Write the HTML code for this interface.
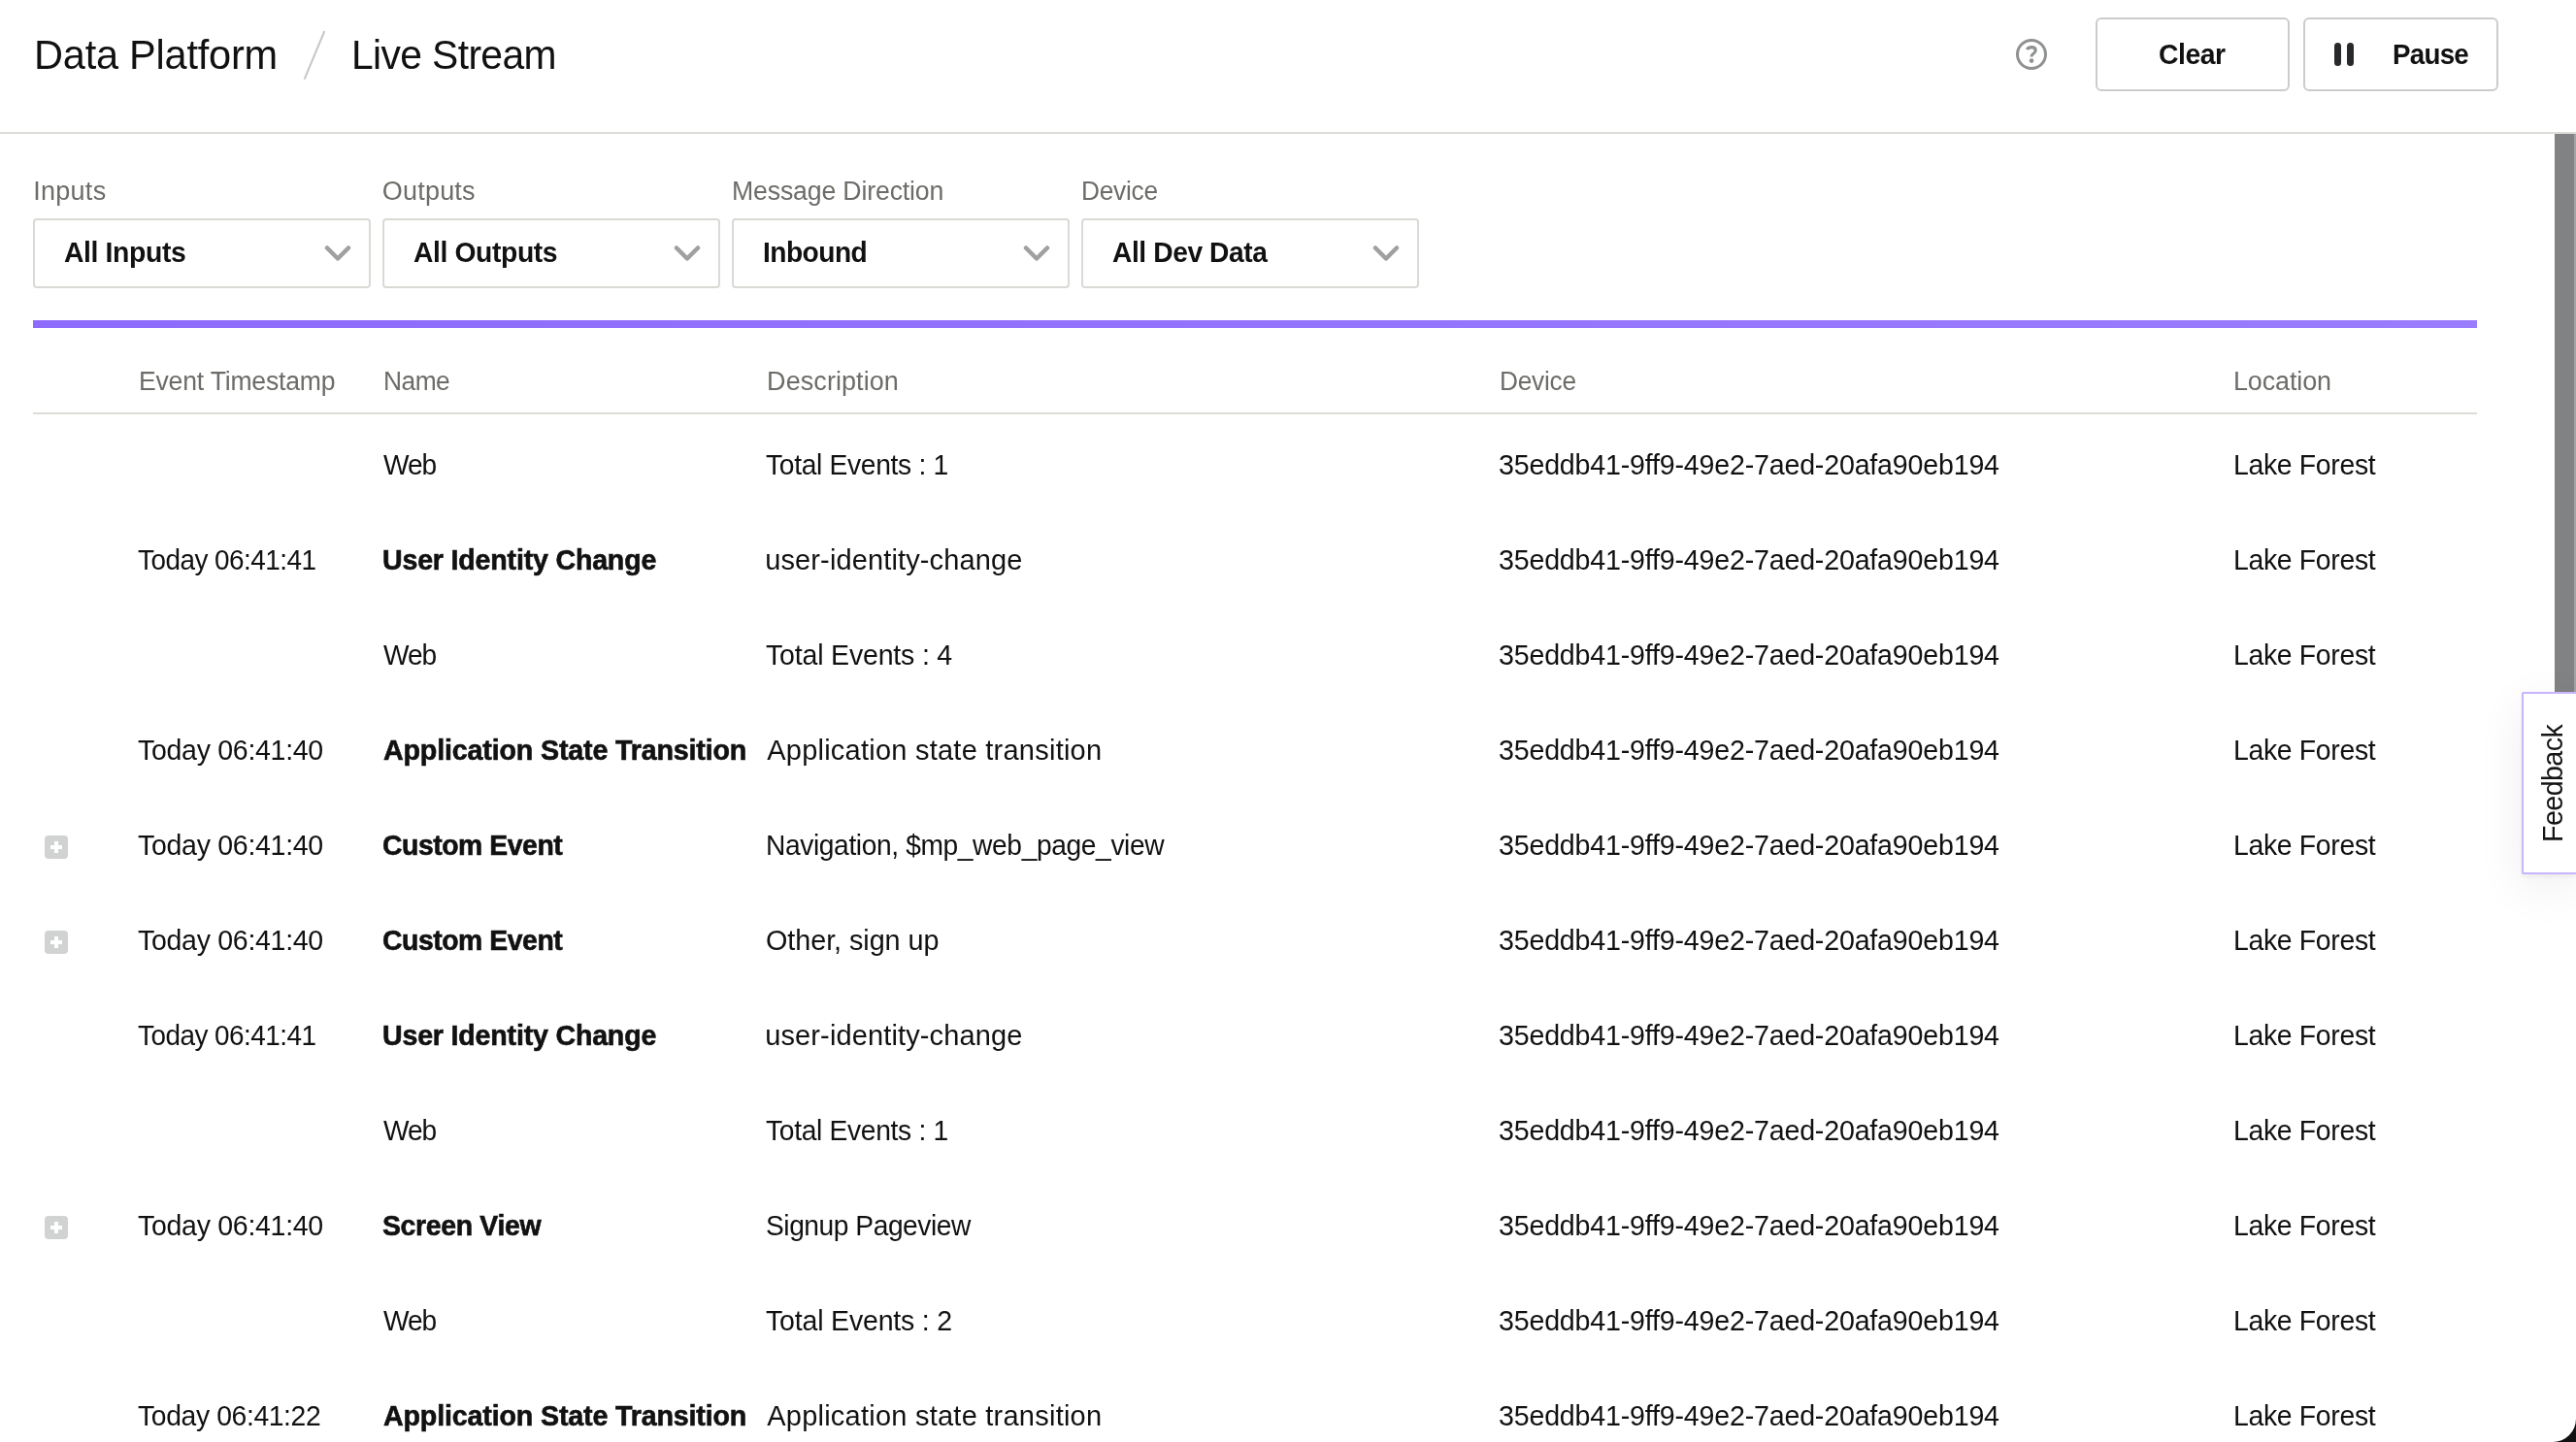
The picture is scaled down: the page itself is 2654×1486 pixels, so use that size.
<!DOCTYPE html>
<html>
<head>
<meta charset="utf-8">
<title>Live Stream</title>
<style>
html,body{margin:0;padding:0;width:2654px;height:1486px;overflow:hidden;background:#fff;}
body{position:relative;font-family:"Liberation Sans",sans-serif;color:#111;}
#root{position:absolute;left:0;top:0;width:2654px;height:1486px;will-change:transform;}
.a{position:absolute;}
.t{position:absolute;white-space:nowrap;line-height:1;font-family:"Liberation Sans",sans-serif;}
.btn{position:absolute;box-sizing:border-box;border:2px solid #cbcccd;border-radius:6px;background:#fff;}
.sel{position:absolute;box-sizing:border-box;top:225px;width:348px;height:72px;border:2px solid #d9d9d5;border-radius:4px;background:#fff;}
.plus{position:absolute;left:46px;width:24px;height:24px;border-radius:4px;background:#d1d2d2;}
.plus:before{content:"";position:absolute;left:6px;top:10px;width:12px;height:4px;background:#fff;}
.plus:after{content:"";position:absolute;left:10px;top:6px;width:4px;height:12px;background:#fff;}
</style>
</head>
<body>
<div id="root">
<!-- header -->
<div class="a" style="left:0;top:136px;width:2654px;height:2px;background:#dcdcd8;"></div>
<svg class="a" style="left:300px;top:20px" width="50" height="70" viewBox="300 20 50 70"><line x1="313.6" y1="81.7" x2="334.4" y2="32" stroke="#c6c6c6" stroke-width="2"/></svg>

<svg class="a" style="left:2077px;top:40px" width="32" height="32" viewBox="0 0 32 32">
<circle cx="16" cy="16" r="14.5" fill="none" stroke="#8f9190" stroke-width="3"/>
<path d="M11.2 11 Q12.8 8.6 16.2 8.6 Q20.2 8.6 20.2 12 Q20.2 13.8 18 15.3 Q15.9 16.8 15.9 18.4" fill="none" stroke="#8f9190" stroke-width="3.1"/>
<circle cx="16" cy="22.6" r="2.3" fill="#8f9190"/>
</svg>

<div class="btn" style="left:2159px;top:18px;width:200px;height:76px;"></div>
<div class="btn" style="left:2373px;top:18px;width:201px;height:76px;"></div>
<div class="a" style="left:2405px;top:44px;width:7px;height:24px;border-radius:3.5px;background:#27292b;"></div>
<div class="a" style="left:2418px;top:44px;width:7px;height:24px;border-radius:3.5px;background:#27292b;"></div>

<!-- scrollbar -->
<div class="a" style="left:2632px;top:138px;width:20px;height:575px;background:#818284;"></div>
<div class="a" style="left:2652px;top:138px;width:2px;height:575px;background:#a3a4a4;"></div>

<!-- filters -->
<div class="sel" style="left:34px;"></div>
<div class="sel" style="left:394px;"></div>
<div class="sel" style="left:754px;"></div>
<div class="sel" style="left:1114px;"></div>
<svg class="a" style="left:0;top:240px" width="1480" height="40">
<g fill="none" stroke="#9fa19f" stroke-width="4.5" stroke-linecap="round" stroke-linejoin="round">
<polyline points="337,15.5 348,26.5 359,15.5"/>
<polyline points="697,15.5 708,26.5 719,15.5"/>
<polyline points="1057,15.5 1068,26.5 1079,15.5"/>
<polyline points="1417,15.5 1428,26.5 1439,15.5"/>
</g>
</svg>

<div class="a" style="left:34px;top:330px;width:2518px;height:8px;background:linear-gradient(90deg,#8d6bfc,#9a7cfe);"></div>
<div class="a" style="left:34px;top:425px;width:2518px;height:2px;background:#dddcd6;"></div>

<div class="plus" style="top:861px;"></div>
<div class="plus" style="top:959px;"></div>
<div class="plus" style="top:1253px;"></div>

<div class="t" style="left:34.5px;top:36px;font-size:42px;letter-spacing:-0.244px;color:#111;transform-origin:0 0;transform:scaleX(0.9894)">Data Platform</div>
<div class="t" style="left:362.2px;top:36px;font-size:42px;letter-spacing:-0.648px;color:#111;transform-origin:0 0;transform:scaleX(0.9719)">Live Stream</div>
<div class="t" style="left:2224.2px;top:42px;font-size:29px;font-weight:700;letter-spacing:-0.511px;color:#111;transform-origin:0 0;transform:scaleX(0.9786)">Clear</div>
<div class="t" style="left:2465.0px;top:42px;font-size:29px;font-weight:700;letter-spacing:-0.784px;color:#111;transform-origin:0 0;transform:scaleX(0.9569)">Pause</div>
<div class="t" style="left:34.2px;top:184px;font-size:27px;letter-spacing:0.280px;color:#6c6d68">Inputs</div>
<div class="t" style="left:393.8px;top:184px;font-size:27px;letter-spacing:0.200px;color:#6c6d68">Outputs</div>
<div class="t" style="left:754.2px;top:184px;font-size:27px;letter-spacing:-0.164px;color:#6c6d68;transform-origin:0 0;transform:scaleX(0.9881)">Message Direction</div>
<div class="t" style="left:1114.3px;top:184px;font-size:27px;letter-spacing:-0.267px;color:#6c6d68;transform-origin:0 0;transform:scaleX(0.9740)">Device</div>
<div class="t" style="left:65.5px;top:246px;font-size:29px;font-weight:700;letter-spacing:-0.386px;color:#111;transform-origin:0 0;transform:scaleX(0.9774)">All Inputs</div>
<div class="t" style="left:425.5px;top:246px;font-size:29px;font-weight:700;letter-spacing:-0.400px;color:#111;transform-origin:0 0;transform:scaleX(0.9760)">All Outputs</div>
<div class="t" style="left:785.5px;top:246px;font-size:29px;font-weight:700;letter-spacing:-0.549px;color:#111;transform-origin:0 0;transform:scaleX(0.9707)">Inbound</div>
<div class="t" style="left:1145.8px;top:246px;font-size:29px;font-weight:700;letter-spacing:-0.421px;color:#111;transform-origin:0 0;transform:scaleX(0.9715)">All Dev Data</div>
<div class="t" style="left:142.8px;top:380px;font-size:27px;letter-spacing:-0.203px;color:#6c6d68;transform-origin:0 0;transform:scaleX(0.9839)">Event Timestamp</div>
<div class="t" style="left:394.7px;top:380px;font-size:27px;letter-spacing:-0.546px;color:#6c6d68;transform-origin:0 0;transform:scaleX(0.9765)">Name</div>
<div class="t" style="left:790.1px;top:380px;font-size:27px;letter-spacing:0.070px;color:#6c6d68">Description</div>
<div class="t" style="left:1545.0px;top:380px;font-size:27px;letter-spacing:-0.267px;color:#6c6d68;transform-origin:0 0;transform:scaleX(0.9740)">Device</div>
<div class="t" style="left:2300.6px;top:380px;font-size:27px;letter-spacing:-0.115px;color:#6c6d68;transform-origin:0 0;transform:scaleX(0.9969)">Location</div>
<div class="t" style="left:395.3px;top:465px;font-size:29px;letter-spacing:-1.134px;color:#111;transform-origin:0 0;transform:scaleX(0.9702)">Web</div>
<div class="t" style="left:788.6px;top:465px;font-size:29px;letter-spacing:-0.342px;color:#111;transform-origin:0 0;transform:scaleX(0.9742)">Total Events : 1</div>
<div class="t" style="left:1544.3px;top:465px;font-size:29px;letter-spacing:-0.208px;color:#111;transform-origin:0 0;transform:scaleX(0.9872)">35eddb41-9ff9-49e2-7aed-20afa90eb194</div>
<div class="t" style="left:2300.9px;top:465px;font-size:29px;letter-spacing:-0.337px;color:#111;transform-origin:0 0;transform:scaleX(0.9796)">Lake Forest</div>
<div class="t" style="left:141.6px;top:563px;font-size:29px;letter-spacing:-0.544px;color:#111;transform-origin:0 0;transform:scaleX(0.9620)">Today 06:41:41</div>
<div class="t" style="left:394.3px;top:563px;font-size:29px;font-weight:700;-webkit-text-stroke:0.6px #111;letter-spacing:-0.192px;color:#111;transform-origin:0 0;transform:scaleX(0.9857)">User Identity Change</div>
<div class="t" style="left:788.2px;top:563px;font-size:29px;letter-spacing:0.126px;color:#111">user-identity-change</div>
<div class="t" style="left:1544.3px;top:563px;font-size:29px;letter-spacing:-0.208px;color:#111;transform-origin:0 0;transform:scaleX(0.9872)">35eddb41-9ff9-49e2-7aed-20afa90eb194</div>
<div class="t" style="left:2300.9px;top:563px;font-size:29px;letter-spacing:-0.337px;color:#111;transform-origin:0 0;transform:scaleX(0.9796)">Lake Forest</div>
<div class="t" style="left:395.3px;top:661px;font-size:29px;letter-spacing:-1.134px;color:#111;transform-origin:0 0;transform:scaleX(0.9702)">Web</div>
<div class="t" style="left:788.6px;top:661px;font-size:29px;letter-spacing:-0.203px;color:#111;transform-origin:0 0;transform:scaleX(0.9847)">Total Events : 4</div>
<div class="t" style="left:1544.3px;top:661px;font-size:29px;letter-spacing:-0.208px;color:#111;transform-origin:0 0;transform:scaleX(0.9872)">35eddb41-9ff9-49e2-7aed-20afa90eb194</div>
<div class="t" style="left:2300.9px;top:661px;font-size:29px;letter-spacing:-0.337px;color:#111;transform-origin:0 0;transform:scaleX(0.9796)">Lake Forest</div>
<div class="t" style="left:141.6px;top:759px;font-size:29px;letter-spacing:-0.305px;color:#111;transform-origin:0 0;transform:scaleX(0.9838)">Today 06:41:40</div>
<div class="t" style="left:394.8px;top:759px;font-size:29px;font-weight:700;-webkit-text-stroke:0.6px #111;letter-spacing:-0.180px;color:#111;transform-origin:0 0;transform:scaleX(0.9887)">Application State Transition</div>
<div class="t" style="left:790.2px;top:759px;font-size:29px;letter-spacing:0.237px;color:#111">Application state transition</div>
<div class="t" style="left:1544.3px;top:759px;font-size:29px;letter-spacing:-0.208px;color:#111;transform-origin:0 0;transform:scaleX(0.9872)">35eddb41-9ff9-49e2-7aed-20afa90eb194</div>
<div class="t" style="left:2300.9px;top:759px;font-size:29px;letter-spacing:-0.337px;color:#111;transform-origin:0 0;transform:scaleX(0.9796)">Lake Forest</div>
<div class="t" style="left:141.6px;top:857px;font-size:29px;letter-spacing:-0.305px;color:#111;transform-origin:0 0;transform:scaleX(0.9838)">Today 06:41:40</div>
<div class="t" style="left:393.9px;top:857px;font-size:29px;font-weight:700;-webkit-text-stroke:0.6px #111;letter-spacing:-0.437px;color:#111;transform-origin:0 0;transform:scaleX(0.9768)">Custom Event</div>
<div class="t" style="left:788.7px;top:857px;font-size:29px;letter-spacing:-0.415px;color:#111;transform-origin:0 0;transform:scaleX(0.9729)">Navigation, $mp_web_page_view</div>
<div class="t" style="left:1544.3px;top:857px;font-size:29px;letter-spacing:-0.208px;color:#111;transform-origin:0 0;transform:scaleX(0.9872)">35eddb41-9ff9-49e2-7aed-20afa90eb194</div>
<div class="t" style="left:2300.9px;top:857px;font-size:29px;letter-spacing:-0.337px;color:#111;transform-origin:0 0;transform:scaleX(0.9796)">Lake Forest</div>
<div class="t" style="left:141.6px;top:955px;font-size:29px;letter-spacing:-0.305px;color:#111;transform-origin:0 0;transform:scaleX(0.9838)">Today 06:41:40</div>
<div class="t" style="left:393.9px;top:955px;font-size:29px;font-weight:700;-webkit-text-stroke:0.6px #111;letter-spacing:-0.437px;color:#111;transform-origin:0 0;transform:scaleX(0.9768)">Custom Event</div>
<div class="t" style="left:789.2px;top:955px;font-size:29px;letter-spacing:-0.062px;color:#111;transform-origin:0 0;transform:scaleX(0.9927)">Other, sign up</div>
<div class="t" style="left:1544.3px;top:955px;font-size:29px;letter-spacing:-0.208px;color:#111;transform-origin:0 0;transform:scaleX(0.9872)">35eddb41-9ff9-49e2-7aed-20afa90eb194</div>
<div class="t" style="left:2300.9px;top:955px;font-size:29px;letter-spacing:-0.337px;color:#111;transform-origin:0 0;transform:scaleX(0.9796)">Lake Forest</div>
<div class="t" style="left:141.6px;top:1053px;font-size:29px;letter-spacing:-0.544px;color:#111;transform-origin:0 0;transform:scaleX(0.9620)">Today 06:41:41</div>
<div class="t" style="left:394.3px;top:1053px;font-size:29px;font-weight:700;-webkit-text-stroke:0.6px #111;letter-spacing:-0.192px;color:#111;transform-origin:0 0;transform:scaleX(0.9857)">User Identity Change</div>
<div class="t" style="left:788.2px;top:1053px;font-size:29px;letter-spacing:0.126px;color:#111">user-identity-change</div>
<div class="t" style="left:1544.3px;top:1053px;font-size:29px;letter-spacing:-0.208px;color:#111;transform-origin:0 0;transform:scaleX(0.9872)">35eddb41-9ff9-49e2-7aed-20afa90eb194</div>
<div class="t" style="left:2300.9px;top:1053px;font-size:29px;letter-spacing:-0.337px;color:#111;transform-origin:0 0;transform:scaleX(0.9796)">Lake Forest</div>
<div class="t" style="left:395.3px;top:1151px;font-size:29px;letter-spacing:-1.134px;color:#111;transform-origin:0 0;transform:scaleX(0.9702)">Web</div>
<div class="t" style="left:788.6px;top:1151px;font-size:29px;letter-spacing:-0.342px;color:#111;transform-origin:0 0;transform:scaleX(0.9742)">Total Events : 1</div>
<div class="t" style="left:1544.3px;top:1151px;font-size:29px;letter-spacing:-0.208px;color:#111;transform-origin:0 0;transform:scaleX(0.9872)">35eddb41-9ff9-49e2-7aed-20afa90eb194</div>
<div class="t" style="left:2300.9px;top:1151px;font-size:29px;letter-spacing:-0.337px;color:#111;transform-origin:0 0;transform:scaleX(0.9796)">Lake Forest</div>
<div class="t" style="left:141.6px;top:1249px;font-size:29px;letter-spacing:-0.305px;color:#111;transform-origin:0 0;transform:scaleX(0.9838)">Today 06:41:40</div>
<div class="t" style="left:393.7px;top:1249px;font-size:29px;font-weight:700;-webkit-text-stroke:0.6px #111;letter-spacing:-0.357px;color:#111;transform-origin:0 0;transform:scaleX(0.9807)">Screen View</div>
<div class="t" style="left:789.2px;top:1249px;font-size:29px;letter-spacing:-0.485px;color:#111;transform-origin:0 0;transform:scaleX(0.9723)">Signup Pageview</div>
<div class="t" style="left:1544.3px;top:1249px;font-size:29px;letter-spacing:-0.208px;color:#111;transform-origin:0 0;transform:scaleX(0.9872)">35eddb41-9ff9-49e2-7aed-20afa90eb194</div>
<div class="t" style="left:2300.9px;top:1249px;font-size:29px;letter-spacing:-0.337px;color:#111;transform-origin:0 0;transform:scaleX(0.9796)">Lake Forest</div>
<div class="t" style="left:395.3px;top:1347px;font-size:29px;letter-spacing:-1.134px;color:#111;transform-origin:0 0;transform:scaleX(0.9702)">Web</div>
<div class="t" style="left:788.6px;top:1347px;font-size:29px;letter-spacing:-0.203px;color:#111;transform-origin:0 0;transform:scaleX(0.9846)">Total Events : 2</div>
<div class="t" style="left:1544.3px;top:1347px;font-size:29px;letter-spacing:-0.208px;color:#111;transform-origin:0 0;transform:scaleX(0.9872)">35eddb41-9ff9-49e2-7aed-20afa90eb194</div>
<div class="t" style="left:2300.9px;top:1347px;font-size:29px;letter-spacing:-0.337px;color:#111;transform-origin:0 0;transform:scaleX(0.9796)">Lake Forest</div>
<div class="t" style="left:141.6px;top:1445px;font-size:29px;letter-spacing:-0.394px;color:#111;transform-origin:0 0;transform:scaleX(0.9768)">Today 06:41:22</div>
<div class="t" style="left:394.8px;top:1445px;font-size:29px;font-weight:700;-webkit-text-stroke:0.6px #111;letter-spacing:-0.180px;color:#111;transform-origin:0 0;transform:scaleX(0.9887)">Application State Transition</div>
<div class="t" style="left:790.2px;top:1445px;font-size:29px;letter-spacing:0.237px;color:#111">Application state transition</div>
<div class="t" style="left:1544.3px;top:1445px;font-size:29px;letter-spacing:-0.208px;color:#111;transform-origin:0 0;transform:scaleX(0.9872)">35eddb41-9ff9-49e2-7aed-20afa90eb194</div>
<div class="t" style="left:2300.9px;top:1445px;font-size:29px;letter-spacing:-0.337px;color:#111;transform-origin:0 0;transform:scaleX(0.9796)">Lake Forest</div>

<!-- feedback -->
<div class="a" style="left:2598px;top:713px;width:56px;height:188px;box-sizing:border-box;border:2px solid #c8b5fc;border-right:none;border-radius:2px 0 0 2px;background:#fff;box-shadow:0 3px 5px rgba(0,0,0,0.05),0 14px 50px rgba(0,0,0,0.07);"></div>
<div class="t" style="left:2615px;top:868px;font-size:30px;letter-spacing:-0.6px;transform-origin:0 0;transform:rotate(-90deg) scaleX(0.955);color:#151515;">Feedback</div>

<!-- window corner -->
<svg class="a" style="left:2630px;top:1462px" width="24" height="24" viewBox="0 0 24 24"><path d="M24 0 L24 24 L0 24 A24 24 0 0 0 24 0 Z" fill="#111"/></svg>
</div>
</body>
</html>
